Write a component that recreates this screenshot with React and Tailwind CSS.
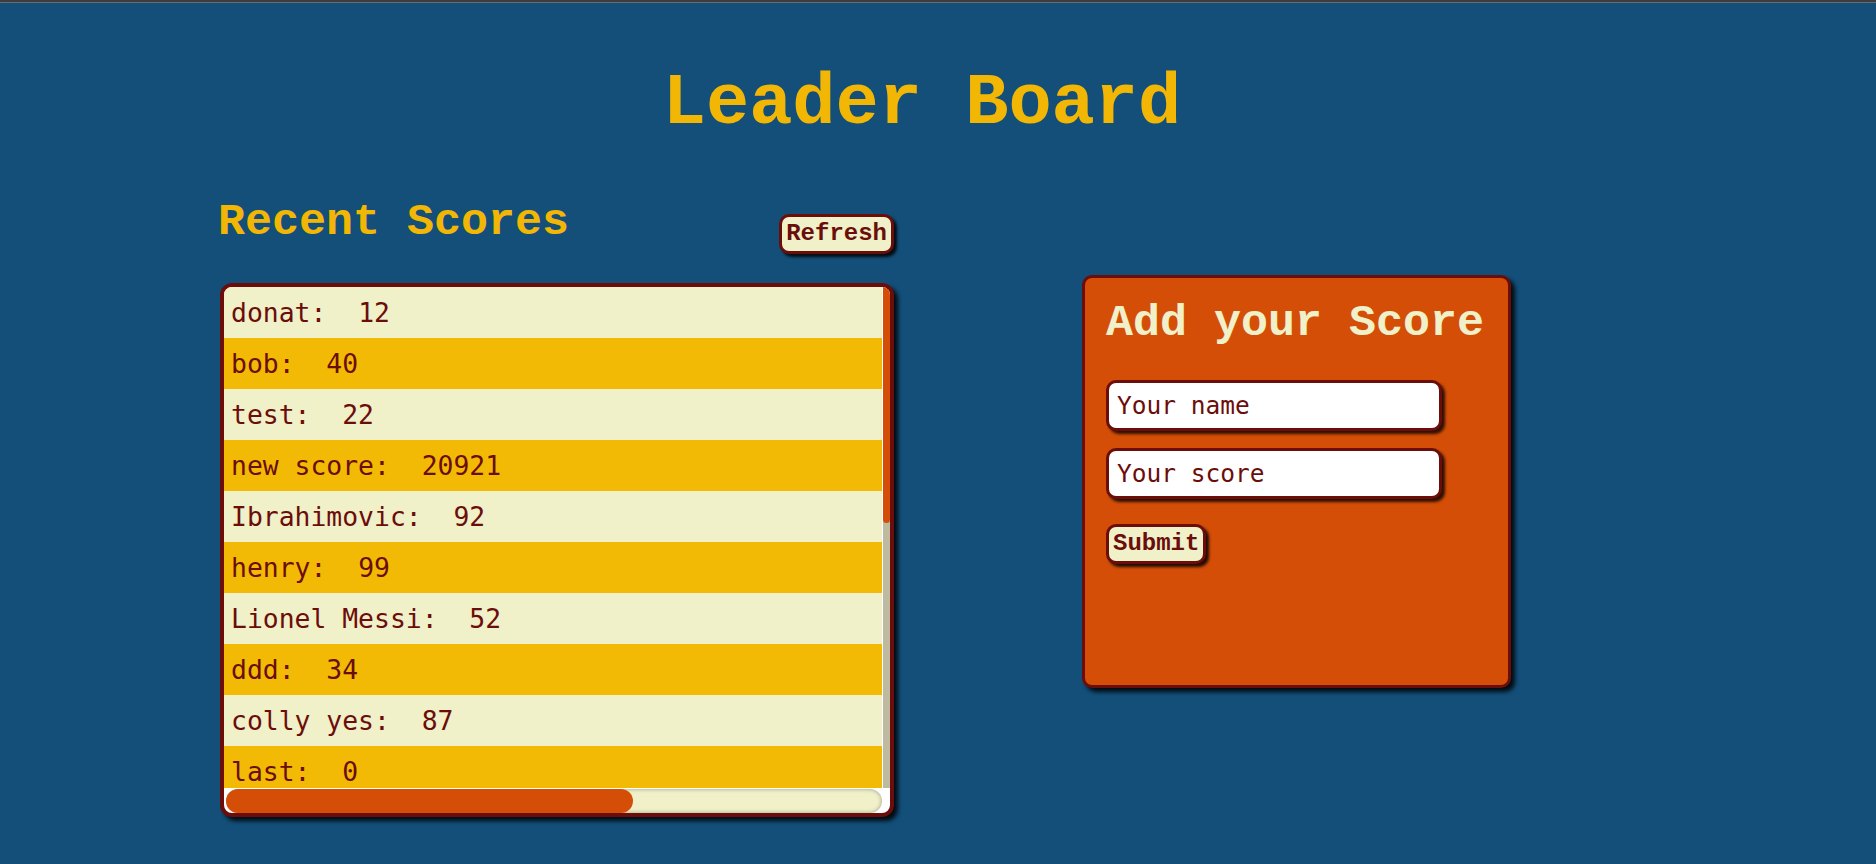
import React from 'react';

const scores = [
  ['donat', 12],
  ['bob', 40],
  ['test', 22],
  ['new score', 20921],
  ['Ibrahimovic', 92],
  ['henry', 99],
  ['Lionel Messi', 52],
  ['ddd', 34],
  ['colly yes', 87],
  ['last', 0],
];

const mono = { fontFamily: '"DejaVu Sans Mono", monospace' };

function ScoreRow({ name, score, i }) {
  return (
    <div
      className={`h-[51px] shrink-0 whitespace-pre pl-[7px] text-[26.4px] leading-[51px] text-[#6b0d0a] ${i % 2 ? 'bg-[#f2ba05]' : 'bg-[#f0f0c9]'}`}
      style={mono}
    >
      {name}:  {score}
    </div>
  );
}

export default function App() {
  return (
    <div className="min-h-screen bg-[#134f79] font-['Liberation_Mono',monospace]">
      <div className="h-[2px] bg-[#3b3d3f]" />
      <div className="h-[1px] bg-[#6a6c6e]" />

      <h1 className="pt-[60px] pr-[32px] text-center text-[72px] font-bold leading-[82px] text-[#f2b705]">
        Leader Board
      </h1>

      <div className="mt-[52px] flex items-start gap-[188px] pl-[220px]">
        {/* scores list */}
        <div className="w-[674px]">
          <div className="flex items-start justify-between">
            <h2 className="-ml-[2px] text-[45px] font-bold leading-[51px] text-[#f2b705]">Recent Scores</h2>
            <button className="mt-[17px] rounded-[10px] border-[3px] border-[#6b0d0a] bg-[#f0f0c9] px-[4px] py-[4px] text-[24px] font-bold leading-[26px] text-[#6b0d0a] shadow-[3px_3px_3px_rgba(0,0,0,0.85)]">
              Refresh
            </button>
          </div>

          <div className="mt-[29px] flex h-[534px] flex-col overflow-hidden rounded-[12px] border-4 border-[#6b0d0a] bg-white shadow-[4px_4px_4px_rgba(0,0,0,0.85)]">
            <div className="flex h-[501px]">
              <div className="flex w-[658px] flex-col overflow-hidden">
                {scores.map(([n, s], i) => (
                  <ScoreRow key={i} name={n} score={s} i={i} />
                ))}
              </div>
              <div className="ml-[1px] flex w-[7px] flex-col bg-[#bdbaa0]">
                <div className="h-[236px] rounded-b-[4px] bg-[#d54e07]" />
              </div>
            </div>
            <div className="flex h-[25px] items-center pl-[2px] pr-[8px] pt-[1px]">
              <div className="h-[24px] w-[656px] rounded-full bg-[#f0f0c9] shadow-[inset_0_0_4px_rgba(0,0,0,0.35)]">
                <div className="h-[24px] w-[407px] rounded-full bg-[#d54e07]" />
              </div>
            </div>
          </div>
        </div>

        {/* add score card */}
        <div className="mt-[78px] h-[413px] w-[429px] rounded-[10px] border-[3px] border-[#6b0d0a] bg-[#d54e07] pl-[21px] pt-[20px] shadow-[4px_4px_4px_rgba(0,0,0,0.85)]">
          <h3 className="text-[45px] font-bold leading-[51px] text-[#f0f0c9]">Add your Score</h3>
          <div className="mt-[31px] flex flex-col gap-[17px]">
            <input
              placeholder="Your name"
              className="h-[51px] w-[336px] rounded-[10px] border-[3px] border-[#6b0d0a] bg-white pl-[8px] text-[24.5px] text-[#6b0d0a] placeholder:text-[#6b0d0a] shadow-[3px_3px_3px_rgba(0,0,0,0.8)] outline-none"
              style={mono}
            />
            <input
              placeholder="Your score"
              className="h-[51px] w-[336px] rounded-[10px] border-[3px] border-[#6b0d0a] bg-white pl-[8px] text-[24.5px] text-[#6b0d0a] placeholder:text-[#6b0d0a] shadow-[3px_3px_3px_rgba(0,0,0,0.8)] outline-none"
              style={mono}
            />
          </div>
          <button className="mt-[25px] rounded-[10px] border-[3px] border-[#6b0d0a] bg-[#f0f0c9] px-[4px] py-[4px] text-[24px] font-bold leading-[26px] text-[#6b0d0a] shadow-[3px_3px_3px_rgba(0,0,0,0.85)]">
            Submit
          </button>
        </div>
      </div>
    </div>
  );
}
